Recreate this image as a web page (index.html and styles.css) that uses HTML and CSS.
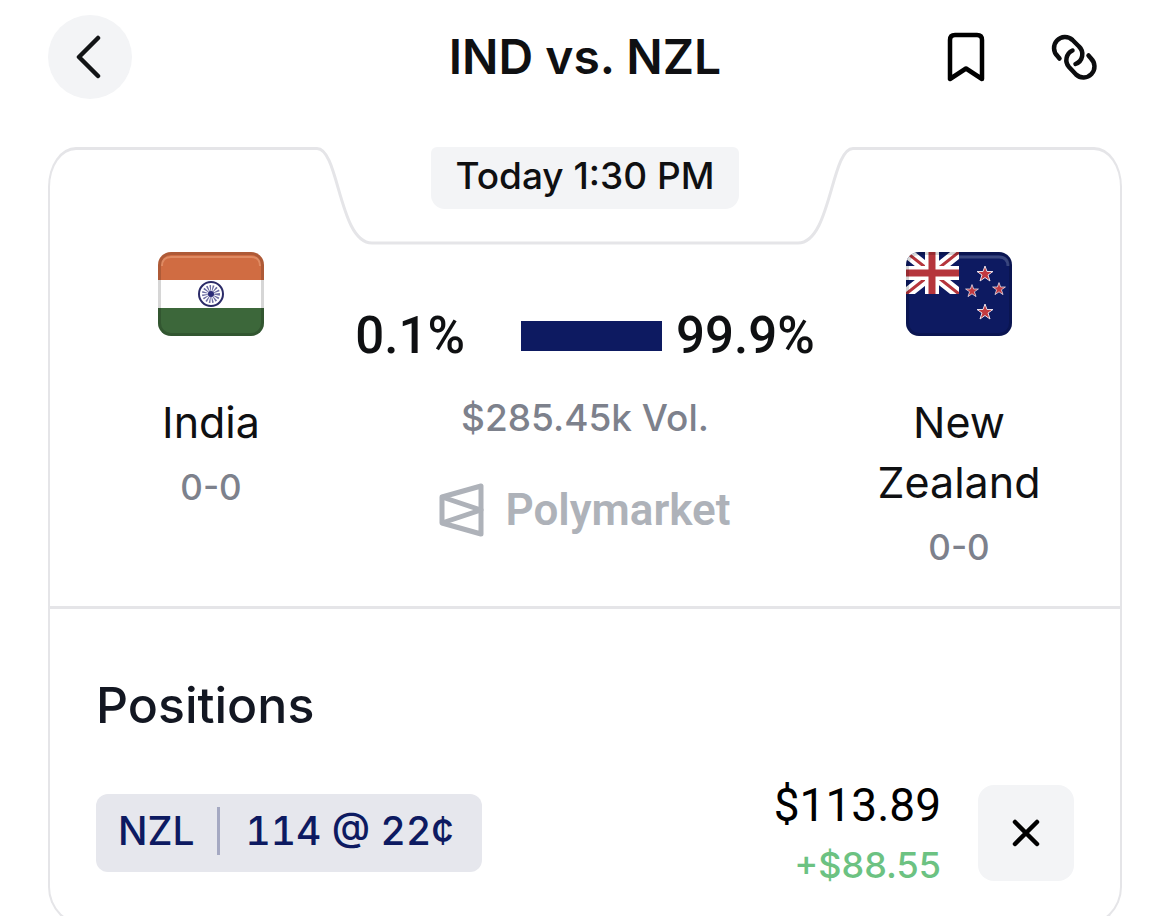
FILE: index.html
```html
<!DOCTYPE html>
<html lang="en">
<head>
  <meta charset="UTF-8" />
  <meta name="viewport" content="width=device-width, initial-scale=1.0"/>
  <title>IND vs. NZL</title>
  <link rel="stylesheet" href="styles.css">
</head>

<body>
  <header class="topbar">
    <button class="back" aria-label="Back">
      <svg width="28" height="48" viewBox="0 0 28 48" fill="none" stroke="#121416" stroke-width="4.500" stroke-linecap="round" stroke-linejoin="round">
        <path d="M22 5L3 24L22 43"/>
      </svg>
    </button>
    <h1>IND vs. NZL</h1>
    <div class="actions">
      <button class="icon-btn" aria-label="Bookmark">
        <svg width="40" height="52" viewBox="0 0 40 52" fill="none" stroke="#000" stroke-width="4.500" stroke-linejoin="round">
          <path d="M4 48V9Q4 4 9 4H31Q36 4 36 9V48L20 37.500Z"/>
        </svg>
      </button>
      <button class="icon-btn" aria-label="Copy link">
        <svg width="48" height="48" viewBox="0 0 48 48" fill="none" stroke="#0c0d0f" stroke-width="4.500" stroke-linecap="round">
          <path d="M9.500 25.500L7.500 23A10.500 10.500 0 0 1 22.500 7L29 13.500A10.500 10.500 0 0 1 25.500 31"/>
          <path d="M38.500 22.500L41 25.500A10.500 10.500 0 0 1 26 41.500L19 34A10.500 10.500 0 0 1 22.500 17.500"/>
        </svg>
      </button>
    </div>
  </header>

  <main class="card">
    <div class="card-top">
      <div class="edge edge-left"></div>
      <div class="notch">
        <svg class="notch-line" width="540" height="98" viewBox="0 0 540 98" fill="none" stroke="#e5e5e8" stroke-width="3">
          <path d="M0 1.500H2C24 1.500 24 96 57 96H483C516 96 516 1.500 538 1.500H540"/>
        </svg>
        <span class="start-time">Today 1:30 PM</span>
      </div>
      <div class="edge edge-right"></div>
    </div>

    <div class="card-body">
      <section class="match">
        <div class="team">
          <svg class="flag" width="106" height="84" viewBox="0 0 106 84">
            <clipPath id="flag-shape"><rect width="106" height="84" rx="13"/></clipPath>
            <g clip-path="url(#flag-shape)">
              <rect width="106" height="28" fill="#d06c42"/>
              <rect y="28" width="106" height="28" fill="#fff"/>
              <rect y="56" width="106" height="28" fill="#3c673a"/>
              <path d="M4 14Q4 5 13 5H93Q102 5 102 14" fill="none" stroke="#df8a62" stroke-width="2"/>
              <rect x="1" y="1" width="104" height="82" rx="12" fill="none" stroke="#000" stroke-opacity=".16" stroke-width="4"/>
            </g>
            <circle cx="53" cy="42" r="12" fill="#fff" stroke="#2b2b68" stroke-width="2"/>
            <circle cx="53" cy="42" r="5" fill="none" stroke="#6d6da3" stroke-width="8" stroke-dasharray="1 1"/>
            <circle cx="53" cy="42" r="3" fill="#2b2b78"/>
          </svg>
          <span class="team-name">India</span>
          <span class="record">0-0</span>
        </div>

        <div class="market">
          <div class="odds">
            <span>0.1%</span>
            <div class="odds-bar"></div>
            <span>99.9%</span>
          </div>
          <div class="volume">$285.45k Vol.</div>
          <div class="source">
            <svg width="46" height="54" viewBox="0 0 46 54" fill="none" stroke="#aeb2b9" stroke-width="5" stroke-linejoin="round">
              <path d="M3 14L42 3V51L3 40Z"/>
              <path d="M3 14L42 27L3 40"/>
            </svg>
            <span>Polymarket</span>
          </div>
        </div>

        <div class="team">
          <svg class="flag" width="106" height="84" viewBox="0 0 106 84">
            <g clip-path="url(#flag-shape)">
              <rect width="106" height="84" fill="#0d1a61"/>
              <clipPath id="canton"><rect width="53" height="42"/></clipPath>
              <g clip-path="url(#canton)">
                <path d="M0 0L53 42M53 0L0 42" stroke="#fff" stroke-width="11"/>
                <path d="M0 0L53 42M53 0L0 42" stroke="#b5353c" stroke-width="3"/>
                <path d="M26 0V42M0 21H53" stroke="#fff" stroke-width="14"/>
                <path d="M26 0V42M0 21H53" stroke="#b5353c" stroke-width="7"/>
              </g>
              <path d="M53 5H93Q102 5 102 14" fill="none" stroke="#39467f" stroke-width="3"/>
              <rect x="1" y="1" width="104" height="82" rx="12" fill="none" stroke="#000" stroke-opacity=".16" stroke-width="4"/>
            </g>
            <defs>
              <path id="star" d="M0 -8L2 -2.500L8 -2.500L3 1L5 7L0 3.500L-5 7L-3 1L-8 -2.500L-2 -2.500Z" fill="#c23a40" stroke="#e9dfe8" stroke-width="1"/>
            </defs>
            <use href="#star" x="79" y="22"/>
            <use href="#star" transform="translate(66 39) scale(.8)"/>
            <use href="#star" transform="translate(93 37) scale(.8)"/>
            <use href="#star" x="79" y="60"/>
          </svg>
          <span class="team-name">New Zealand</span>
          <span class="record">0-0</span>
        </div>
      </section>

      <section class="positions">
        <h2>Positions</h2>
        <div class="position">
          <div class="ticket">
            <span class="side">NZL</span>
            <span class="shares">114 @ 22¢</span>
          </div>
          <div class="value">
            <span class="total">$113.89</span>
            <span class="gain">+$88.55</span>
          </div>
          <button class="close" aria-label="Close position">
            <svg width="32" height="32" viewBox="0 0 32 32" fill="none" stroke="#000" stroke-width="4.500" stroke-linecap="round">
              <path d="M5 5L27 27M27 5L5 27"/>
            </svg>
          </button>
        </div>
      </section>
    </div>
  </main>
</body>
</html>
```

FILE: styles.css
```css
* {
  box-sizing: border-box;
}

body {
  margin: 0;
  padding: 15px 48px 0;
  font-family: Inter, "Liberation Sans", sans-serif;
  background: #fff;
  color: #0f1012;
}

button {
  display: flex;
  align-items: center;
  justify-content: center;
  padding: 0;
  border: none;
  background: none;
  cursor: pointer;
}

svg {
  display: block;
}

h1,
h2 {
  margin: 0;
  line-height: 60px;
}

/* header */

.topbar {
  display: grid;
  grid-template-columns: 1fr auto 1fr;
  align-items: center;
}

.back {
  width: 84px;
  height: 84px;
  border-radius: 50%;
  background: #f3f4f6;
}

h1 {
  font-size: 48px;
  font-weight: 600;
}

.actions {
  display: flex;
  justify-content: flex-end;
  align-items: center;
  gap: 64px;
  padding-right: 24px;
}

/* card outline, with the notch cut into its top edge */

.card {
  margin-top: 48px;
}

.card-top {
  display: flex;
  height: 98px;
}

.edge {
  flex: 1;
  border-top: 3px solid #e5e5e8;
}

.edge-left {
  border-left: 2px solid #e5e5e8;
  border-top-left-radius: 28px 40px;
}

.edge-right {
  border-right: 2px solid #e5e5e8;
  border-top-right-radius: 28px 40px;
}

.notch {
  position: relative;
  display: flex;
  justify-content: center;
  align-items: flex-start;
  width: 540px;
}

.notch-line {
  position: absolute;
  top: 0;
  left: 0;
}

.start-time {
  position: relative;
  height: 62px;
  padding: 0 24px;
  border-radius: 6px 6px 14px 14px;
  background: #f3f4f6;
  font-size: 37px;
  font-weight: 500;
  line-height: 58px;
}

.card-body {
  border: 2px solid #e5e5e8;
  border-top: none;
  border-radius: 0 0 40px 40px;
}

/* match */

.match {
  display: grid;
  grid-template-columns: 200px 1fr 200px;
  padding: 7px 61px 29px;
  border-bottom: 3px solid #e5e5e8;
}

.team {
  display: flex;
  flex-direction: column;
  align-items: center;
  text-align: center;
}

.team-name {
  margin-top: 56px;
  font-size: 43px;
  line-height: 60px;
}

.record {
  margin-top: 5px;
  color: #7d818c;
  font-size: 35px;
  font-weight: 500;
  line-height: 60px;
}

.market {
  display: flex;
  flex-direction: column;
  align-items: center;
  padding-top: 54px;
}

.odds {
  display: flex;
  align-items: center;
  font-family: Roboto, Inter, sans-serif;
  font-size: 51px;
  font-weight: 500;
  line-height: 60px;
}

.odds-bar {
  width: 141px;
  height: 30px;
  margin: 0 14px 0 56px;
  background: #0d1a61;
}

.volume {
  margin-top: 22px;
  color: #7d818c;
  font-size: 37px;
  font-weight: 500;
  line-height: 60px;
}

.source {
  display: flex;
  align-items: center;
  gap: 20px;
  margin-top: 32px;
  color: #aeb2b9;
  font-family: Roboto, Inter, sans-serif;
  font-size: 44px;
  font-weight: 600;
  line-height: 60px;
}

/* positions */

.positions {
  padding: 66px 46px 30px;
}

h2 {
  color: #131722;
  font-size: 50px;
  font-weight: 500;
}

.position {
  display: flex;
  align-items: center;
  margin-top: 35px;
}

.ticket {
  display: flex;
  align-items: center;
  height: 78px;
  padding: 0 28px 4px 22px;
  border-radius: 12px;
  background: #e6e7ed;
  color: #0d1a61;
  font-size: 39px;
  font-weight: 500;
  font-variant-numeric: tabular-nums;
  line-height: 48px;
}

.shares {
  margin-left: 22px;
  padding-left: 26px;
  border-left: 3px solid #a5a9c2;
}

.value {
  display: flex;
  flex-direction: column;
  align-items: flex-end;
  margin-left: auto;
  padding-top: 5px;
  line-height: 60px;
}

.total {
  color: #000;
  font-family: Roboto, Inter, sans-serif;
  font-size: 46px;
}

.gain {
  color: #6cc282;
  font-size: 36px;
  font-weight: 500;
}

.close {
  width: 96px;
  height: 96px;
  margin-left: 37px;
  border-radius: 16px;
  background: #f3f4f6;
}
```
